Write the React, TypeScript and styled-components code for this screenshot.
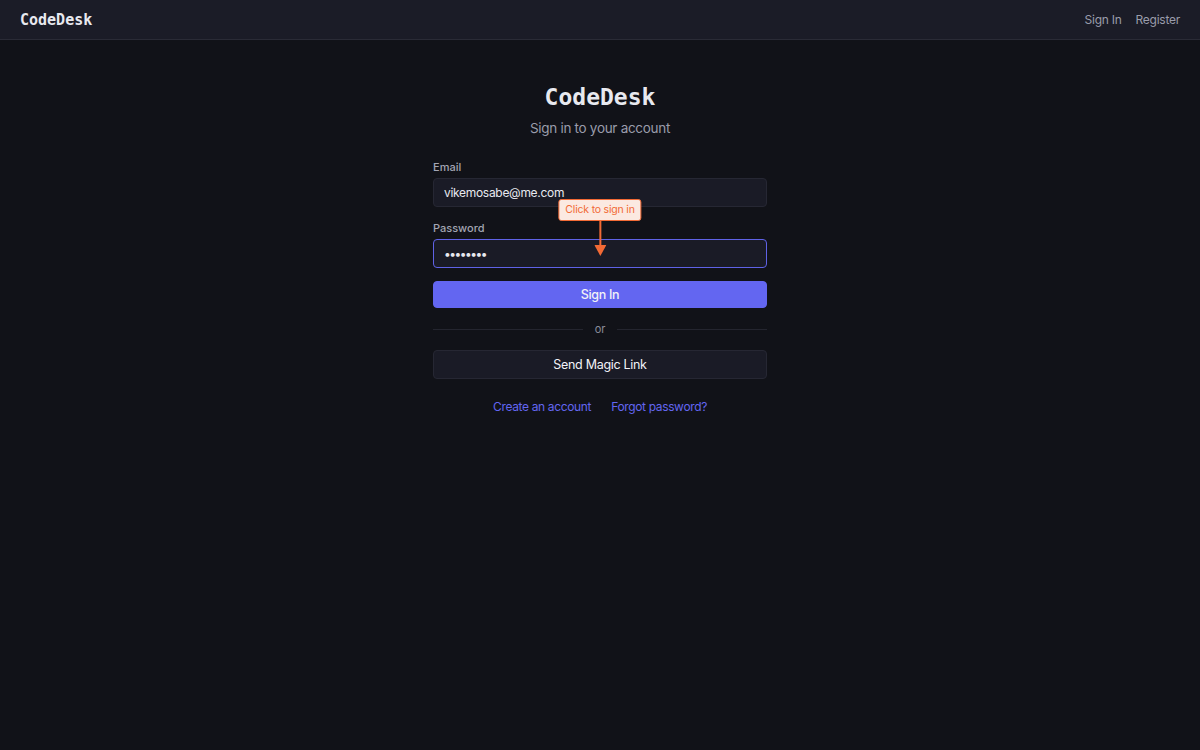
import React from 'react';
import styled, { createGlobalStyle } from 'styled-components';

const GlobalStyle = createGlobalStyle`
  html, body {
    margin: 0;
    padding: 0;
    background: #111218;
  }

  body {
    font-family: Inter, "Noto Sans", "Liberation Sans", sans-serif;
    color: #e4e5ea;
    min-height: 750px;
  }

  * {
    box-sizing: border-box;
  }
`;

const Header = styled.header`
  height: 40px;
  display: flex;
  align-items: center;
  justify-content: space-between;
  padding: 0 20px;
  background: #1b1c27;
  border-bottom: 1px solid #2a2b36;
`;

const Logo = styled.div`
  font-family: "DejaVu Sans Mono", "Liberation Mono", monospace;
  font-weight: bold;
  font-size: 15px;
  color: #e8e9ef;
`;

const Nav = styled.nav`
  display: flex;
  gap: 14px;

  & a {
    font-size: 12px;
    letter-spacing: -0.25px;
    color: #9a9cab;
    text-decoration: none;
  }
`;

const Main = styled.main`
  display: flex;
  flex-direction: column;
  align-items: center;
  padding-top: 43px;
`;

const Title = styled.h1`
  margin: 0;
  font-family: "DejaVu Sans Mono", "Liberation Mono", monospace;
  font-weight: bold;
  font-size: 23px;
  line-height: 28px;
  color: #e8e9ef;
`;

const Subtitle = styled.p`
  margin: 7px 0 0;
  font-size: 13.5px;
  line-height: 20px;
  letter-spacing: -0.3px;
  color: #9a9cab;
`;

const Form = styled.form`
  position: relative;
  width: 334px;
  margin-top: 21px;
  display: flex;
  flex-direction: column;
  gap: 13px;
`;

const Field = styled.div`
  display: flex;
  flex-direction: column;
  gap: 3px;
`;

const Label = styled.label`
  font-size: 11px;
  line-height: 16px;
  font-weight: 500;
  color: #a3a5b3;
`;

const Input = styled.input<{ $focused?: boolean }>`
  height: 29px;
  padding: 0 10px;
  font: inherit;
  font-size: 12px;
  color: #e8e9ef;
  background: #1a1b26;
  border: 1px solid ${(p) => (p.$focused ? '#5f62e6' : '#262733')};
  border-radius: 4px;
  outline: none;
  letter-spacing: ${(p) => (p.type === 'password' ? '-1.5px' : '-0.3px')};
`;

const Button = styled.button<{ $primary?: boolean }>`
  height: ${(p) => (p.$primary ? '27px' : '29px')};
  font: inherit;
  font-size: 12.5px;
  font-weight: ${(p) => (p.$primary ? 500 : 400)};
  letter-spacing: -0.3px;
  color: #f2f2f7;
  background: ${(p) => (p.$primary ? '#6366f1' : '#1a1b26')};
  border: 1px solid ${(p) => (p.$primary ? '#6366f1' : '#262733')};
  border-radius: 4px;
  cursor: pointer;
`;

const Divider = styled.div`
  display: flex;
  align-items: center;
  gap: 12px;
  height: 16px;
  font-size: 11px;
  color: #8a8c9a;

  &::before,
  &::after {
    content: '';
    flex: 1;
    height: 1px;
    background: #24252f;
  }
`;

const Links = styled.div`
  display: flex;
  justify-content: center;
  gap: 20px;
  margin-top: 7px;

  & a {
    font-size: 12px;
    line-height: 16px;
    letter-spacing: -0.35px;
    color: #6366f1;
    text-decoration: none;
  }
`;

const Hint = styled.div`
  position: absolute;
  top: 40px;
  left: 50%;
  transform: translateX(-50%);
  display: flex;
  flex-direction: column;
  align-items: center;
  pointer-events: none;
`;

const HintBox = styled.div`
  padding: 3px 6px;
  font-size: 10.5px;
  line-height: 14px;
  letter-spacing: -0.2px;
  white-space: nowrap;
  color: #f26a35;
  background: #fbe9e1;
  border: 1px solid #f26a35;
  border-radius: 3px;
`;

function App() {
  return (
    <>
      <GlobalStyle />
      <Header>
        <Logo>CodeDesk</Logo>
        <Nav>
          <a href="#signin">Sign In</a>
          <a href="#register">Register</a>
        </Nav>
      </Header>
      <Main>
        <Title>CodeDesk</Title>
        <Subtitle>Sign in to your account</Subtitle>
        <Form onSubmit={(e) => e.preventDefault()}>
          <Field>
            <Label htmlFor="email">Email</Label>
            <Input id="email" type="email" defaultValue="vikemosabe@me.com" />
          </Field>
          <Field>
            <Label htmlFor="password">Password</Label>
            <Input id="password" type="password" defaultValue="password" $focused />
          </Field>
          <Button type="submit" $primary>Sign In</Button>
          <Divider>or</Divider>
          <Button type="button">Send Magic Link</Button>
          <Links>
            <a href="#register">Create an account</a>
            <a href="#forgot">Forgot password?</a>
          </Links>
          <Hint>
            <HintBox>Click to sign in</HintBox>
            <svg width="12" height="36" viewBox="0 0 12 36">
              <line x1="6" y1="0" x2="6" y2="26" stroke="#f26a35" strokeWidth="2" />
              <polygon points="0,24 12,24 6,35" fill="#f26a35" />
            </svg>
          </Hint>
        </Form>
      </Main>
    </>
  );
}

export default App;
